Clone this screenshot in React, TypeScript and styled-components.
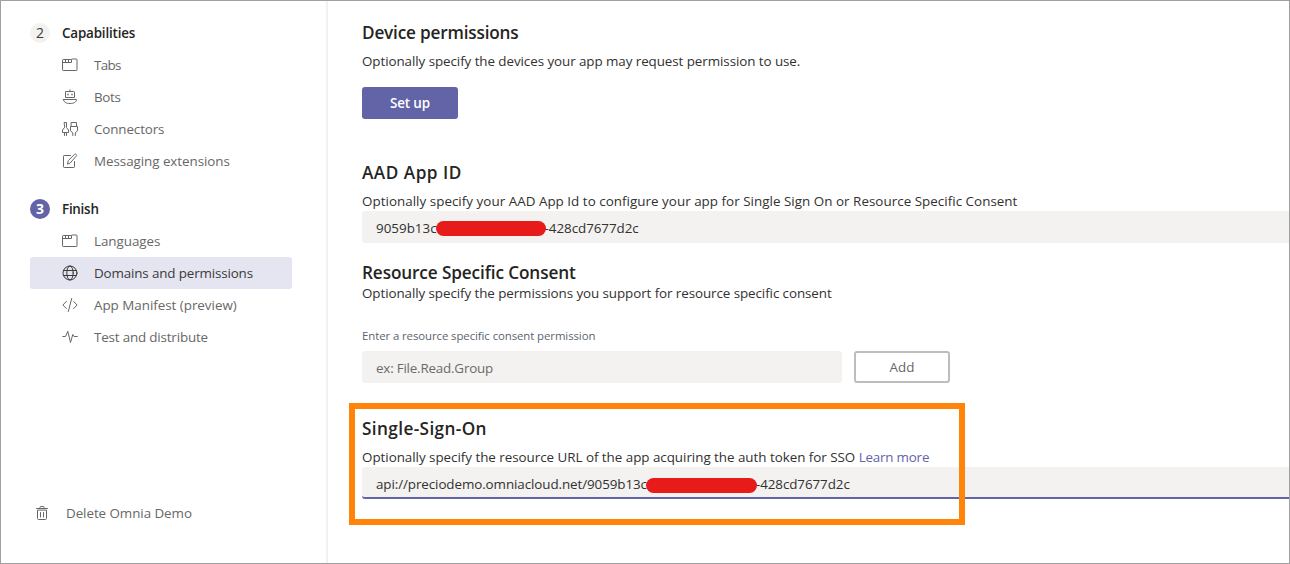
import React from "react";
import styled, { createGlobalStyle, css } from "styled-components";

const GlobalStyle = createGlobalStyle`
  * { box-sizing: border-box; }
  body {
    margin: 0;
    background: #fff;
    color: #323130;
    font: 13.4px/20px "Open Sans", "Noto Sans", sans-serif;
  }
  h2, p { margin: 0; }
`;

const Frame = styled.div`
  position: relative;
  display: flex;
  width: 1290px;
  height: 564px;
  border: 1px solid #a0a0a0;
  overflow: hidden;
`;

const Sidebar = styled.nav`
  display: flex;
  flex-direction: column;
  flex: none;
  width: 327px;
  padding: 16px 34px 0 29px;
  border-right: 2px solid #f2f2f2;
`;

const StepGroup = styled.section`
  margin-bottom: 16px;
`;

const StepHeader = styled.div`
  display: flex;
  align-items: center;
  gap: 12px;
  height: 32px;
`;

const StepNumber = styled.span<{ $current?: boolean }>`
  width: 20px;
  height: 20px;
  border-radius: 50%;
  text-align: center;
  font-size: 14px;
  background: ${(p) => (p.$current ? "#6264a7" : "#f3f2f1")};
  color: ${(p) => (p.$current ? "#fff" : "#3b3a39")};
  font-weight: ${(p) => (p.$current ? 700 : 400)};
`;

const Label = styled.span<{ $spacing?: number }>`
  white-space: nowrap;
  letter-spacing: ${(p) => p.$spacing ?? 0}px;
`;

const StepTitle = styled(Label)`
  color: #252423;
  font-weight: 600;
`;

const NavItem = styled.div<{ $active?: boolean }>`
  display: flex;
  align-items: center;
  gap: 16px;
  height: 32px;
  padding-left: 32px;
  border-radius: 3px;
  color: #686766;
  ${(p) =>
    p.$active &&
    css`
      background: #e5e5f1;
      color: #3b3a39;
    `}
`;

const DeleteItem = styled.div`
  display: flex;
  align-items: center;
  gap: 16px;
  height: 32px;
  margin: 128px 0 0 4px;
  color: #686766;
`;

const Glyph = styled.svg`
  flex: none;
  width: 16px;
  height: 16px;
  fill: none;
  stroke: currentColor;
  stroke-width: 1;
  stroke-linecap: round;
  stroke-linejoin: round;
`;

const Main = styled.main`
  display: flex;
  flex-direction: column;
  flex: 1;
  min-width: 0;
  padding: 19px 0 0 34px;
`;

const Section = styled.section<{ $gap: number }>`
  margin-bottom: ${(p) => p.$gap}px;
`;

const Heading = styled.h2<{ $tight?: boolean; $spacing?: number }>`
  height: 24px;
  margin-bottom: ${(p) => (p.$tight ? -1 : 7)}px;
  color: #252423;
  font-size: 17.2px;
  font-weight: 550;
  line-height: 26px;
  letter-spacing: ${(p) => p.$spacing ?? 0}px;
  white-space: nowrap;
`;

const Description = styled.p<{ $spacing?: number }>`
  height: 20px;
  white-space: nowrap;
  letter-spacing: ${(p) => p.$spacing ?? 0}px;
`;

const FieldLabel = styled.p`
  height: 16px;
  margin: 25px 0 7px;
  color: #5c6470;
  font-size: 11.4px;
  line-height: 16px;
  letter-spacing: -0.08px;
`;

const Link = styled.a`
  color: #6264a7;
`;

const Button = styled.button<{ $primary?: boolean }>`
  width: 96px;
  height: 32px;
  padding: 0;
  border: ${(p) => (p.$primary ? "0" : "2px solid #bdbdbd")};
  border-radius: 3px;
  background: ${(p) => (p.$primary ? "#6264a7" : "#fff")};
  color: ${(p) => (p.$primary ? "#fff" : "#686766")};
  font: inherit;
  font-weight: ${(p) => (p.$primary ? 600 : 400)};
  letter-spacing: ${(p) => (p.$primary ? -0.15 : 0)}px;
`;

const SetUpButton = styled(Button)`
  display: block;
  margin-top: 16px;
`;

const Field = styled.div<{ $width?: number; $focused?: boolean; $placeholder?: boolean }>`
  display: flex;
  align-items: center;
  width: ${(p) => (p.$width ? `${p.$width}px` : "calc(100% + 8px)")};
  height: 32px;
  padding: ${(p) => (p.$focused ? "5px 14px 2px" : "2px 14px 0")};
  border-radius: 3px;
  background: #f3f2f1;
  color: ${(p) => (p.$placeholder ? "#6b6a69" : "#323130")};
  ${(p) => p.$focused && "border-bottom: 2px solid #6264a7;"}
`;

const Redaction = styled.span<{ $width: number; $drop?: number }>`
  z-index: 1;
  flex: none;
  width: ${(p) => p.$width}px;
  height: 15px;
  margin: ${(p) => p.$drop ?? 1}px -1px 0;
  border-radius: 8px;
  background: #e81b1b;
`;

const FieldRow = styled.div`
  display: flex;
  gap: 12px;
`;

const Highlight = styled.div`
  position: absolute;
  left: 348px;
  top: 402px;
  width: 616px;
  height: 122px;
  border: 6px solid #ff8409;
`;

const icons = {
  tabs: (
    <>
      <path d="M.5 5.500V3.200c0-.5.3-.7.700-.7h8.300v3H.5v7.300c0 .5.300.7.700.7h13.100c.5 0 .7-.2.700-.7V2.700c0-.5-.2-.7-.7-.7h-3.800c-.6 0-1 .2-1 .5" />
      <path d="M3.500 2.500v3M6.500 2.500v3" />
    </>
  ),
  bot: (
    <>
      <path d="M8 .8v1.700M4.200 2.500h7.600c.4 0 .7.300.7.700v5.300h-9V3.200c0-.4.300-.7.700-.7zM1.500 10.500h13c0 2.500-2.500 4-6.500 4s-6.500-1.500-6.500-4z" />
      <path d="M6 5.300v.5M10 5.300v.5" strokeWidth="1.400" />
    </>
  ),
  connector: (
    <>
      <path d="M2.500 1.500h2v5L6.500 9v2.500h-6V9l2-2.500zM2.500 11.500v3M4.500 11.500v3" />
      <path d="M9.500 1.500h5v4h-5zM9.500 5.500h-1v4.200l2.300 2.300v2.500M14.500 5.500h1v4.200L13.300 12v2.500" />
    </>
  ),
  edit: (
    <path d="M8.500 2.500H2.200c-.4 0-.7.3-.7.700v10.600c0 .4.300.7.700.7h9.600c.4 0 .7-.3.700-.7V8.500M5.500 10.700l.8-3.100 6.200-6.200c.5-.5 1.200-.5 1.700 0s.5 1.200 0 1.700L8.300 9.900z" />
  ),
  globe: (
    <>
      <circle cx="8" cy="8" r="7" />
      <ellipse cx="8" cy="8" rx="3.200" ry="7" />
      <path d="M1.500 5.500h13M1.500 10.500h13" />
    </>
  ),
  code: <path d="M4.300 4.500L.9 8l3.400 3.500M11.700 4.500L15.100 8l-3.400 3.500M9.700 1.500l-3.400 13" />,
  pulse: <path d="M.8 7.500h2.700L5.800 2.300 8.500 13.500l2.300-8 1.200 2h3.300" />,
  trash: (
    <>
      <path d="M2.500 3.500h11M6 3.300V2.200c0-.4.300-.7.700-.7h2.600c.4 0 .7.300.7.700v1.100M3.500 5.500v8c0 .6.400 1 1 1h7c.6 0 1-.4 1-1v-8z" />
      <path d="M6.500 7.500v4.500M9.500 7.500v4.500" />
    </>
  ),
};

type IconName = keyof typeof icons;

const Icon = ({ name }: { name: IconName }) => (
  <Glyph viewBox="0 0 16 16" aria-hidden="true">
    {icons[name]}
  </Glyph>
);

interface Item {
  icon: IconName;
  text: string;
  spacing?: number;
  active?: boolean;
}

interface Step {
  number: number;
  title: string;
  spacing?: number;
  current?: boolean;
  items: Item[];
}

const steps: Step[] = [
  {
    number: 2,
    title: "Capabilities",
    spacing: -0.17,
    items: [
      { icon: "tabs", text: "Tabs", spacing: -0.65 },
      { icon: "bot", text: "Bots", spacing: -0.3 },
      { icon: "connector", text: "Connectors", spacing: -0.12 },
      { icon: "edit", text: "Messaging extensions", spacing: -0.05 },
    ],
  },
  {
    number: 3,
    title: "Finish",
    spacing: -0.25,
    current: true,
    items: [
      { icon: "tabs", text: "Languages", spacing: -0.05 },
      { icon: "globe", text: "Domains and permissions", spacing: -0.14, active: true },
      { icon: "code", text: "App Manifest (preview)", spacing: -0.02 },
      { icon: "pulse", text: "Test and distribute", spacing: -0.17 },
    ],
  },
];

export default function App() {
  return (
    <Frame>
      <GlobalStyle />
      <Sidebar>
        {steps.map((step) => (
          <StepGroup key={step.number}>
            <StepHeader>
              <StepNumber $current={step.current}>{step.number}</StepNumber>
              <StepTitle $spacing={step.spacing}>{step.title}</StepTitle>
            </StepHeader>
            {step.items.map((item) => (
              <NavItem key={item.text} $active={item.active}>
                <Icon name={item.icon} />
                <Label $spacing={item.spacing}>{item.text}</Label>
              </NavItem>
            ))}
          </StepGroup>
        ))}
        <DeleteItem>
          <Icon name="trash" />
          <Label $spacing={-0.06}>Delete Omnia Demo</Label>
        </DeleteItem>
      </Sidebar>
      <Main>
        <Section $gap={41}>
          <Heading $spacing={-0.19}>Device permissions</Heading>
          <Description $spacing={-0.07}>
            Optionally specify the devices your app may request permission to use.
          </Description>
          <SetUpButton $primary>Set up</SetUpButton>
        </Section>
        <Section $gap={17}>
          <Heading $spacing={0.5}>AAD App ID</Heading>
          <Description $spacing={0.03}>
            Optionally specify your AAD App Id to configure your app for Single Sign On or Resource Specific Consent
          </Description>
          <Field>
            <Label>9059b13c</Label>
            <Redaction $width={110} />
            <Label $spacing={-0.05}>-428cd7677d2c</Label>
          </Field>
        </Section>
        <Section $gap={33}>
          <Heading $tight $spacing={-0.12}>
            Resource Specific Consent
          </Heading>
          <Description $spacing={-0.08}>
            Optionally specify the permissions you support for resource specific consent
          </Description>
          <FieldLabel>Enter a resource specific consent permission</FieldLabel>
          <FieldRow>
            <Field $width={480} $placeholder>
              <Label $spacing={-0.2}>ex: File.Read.Group</Label>
            </Field>
            <Button>Add</Button>
          </FieldRow>
        </Section>
        <Section $gap={0}>
          <Heading $spacing={0.38}>Single-Sign-On</Heading>
          <Description>
            <Label $spacing={-0.03}>
              Optionally specify the resource URL of the app acquiring the auth token for SSO{" "}
            </Label>
            <Link>
              <Label $spacing={-0.2}>Learn more</Label>
            </Link>
          </Description>
          <Field $focused>
            <Label $spacing={-0.085}>api://preciodemo.omniacloud.net/9059b13c</Label>
            <Redaction $width={111} $drop={3} />
            <Label $spacing={-0.07}>-428cd7677d2c</Label>
          </Field>
        </Section>
      </Main>
      <Highlight />
    </Frame>
  );
}
